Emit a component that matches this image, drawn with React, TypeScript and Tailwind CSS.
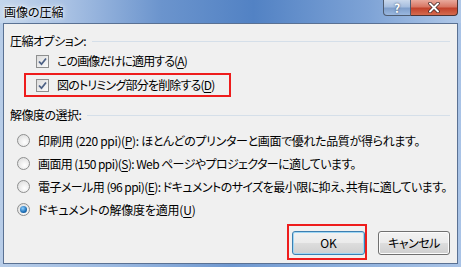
import React from "react";

const FONT = "font-['Noto_Sans_CJK_JP','Noto_Sans',sans-serif] [font-feature-settings:'palt']";

function U({ children }: { children: React.ReactNode }) {
  return <span className="underline underline-offset-2">{children}</span>;
}

function Checkbox() {
  return (
    <span className="flex h-[13px] w-[13px] shrink-0 items-center justify-center border border-[#8e8f8f] bg-[linear-gradient(135deg,#dcdcdc,#fbfbfb)]">
      <svg width="11" height="11" viewBox="0 0 11 11">
        <path d="M2 5.5 L4.5 8.2 L9 2.5" fill="none" stroke="#4d6185" strokeWidth="1.8" />
      </svg>
    </span>
  );
}

function Radio({ checked }: { checked?: boolean }) {
  return (
    <span className="flex h-[13px] w-[13px] shrink-0 items-center justify-center rounded-full border border-[#8e8f8f] bg-[radial-gradient(circle_at_60%_65%,#ffffff,#d8d8d8)]">
      {checked && (
        <span className="h-[7px] w-[7px] rounded-full bg-[radial-gradient(circle_at_40%_35%,#8fd0ff,#1a6db5_60%,#0b3f73)]" />
      )}
    </span>
  );
}

function Heading({ label }: { label: string }) {
  return (
    <div className="flex h-[16px] items-center pr-[7px]">
      <span className="pl-[6px] tracking-[-0.5px]">{label}</span>
      <span className="ml-[6px] h-px flex-1 bg-[#d5dfe9]" />
    </div>
  );
}

const RADIOS = [
  { pre: "印刷用 (220 ppi)(", key: "P", post: "): ほとんどのプリンターと画面で優れた品質が得られます。", track: "tracking-[-0.35px]" },
  { pre: "画面用 (150 ppi)(", key: "S", post: "): Web ページやプロジェクターに適しています。", track: "tracking-[-0.6px]" },
  { pre: "電子メール用 (96 ppi)(", key: "E", post: "): ドキュメントのサイズを最小限に抑え、共有に適しています。", track: "tracking-[-0.55px]" },
  { pre: "ドキュメントの解像度を適用(", key: "U", post: ")", checked: true, track: "tracking-[-0.2px]" },
];

export default function App() {
  return (
    <div className={`relative h-[267px] w-[461px] overflow-hidden bg-[linear-gradient(90deg,#b8cde8_0%,#9ab8e0_25%,#6f98d0_50%,#8cafdc_75%,#a9c3e6_100%)] text-[12px] leading-none text-black ${FONT}`}>
      {/* title bar */}
      <div className="relative flex h-[23px] items-center bg-[linear-gradient(90deg,#c4d6ec_0%,#a7c0e3_15%,#6b94cd_35%,#5282c4_55%,#7ea3d6_80%,#b0c8e8_100%)]">
        <span className="pl-[4px] pt-[1px] text-[12px] text-black [text-shadow:0_0_6px_#ffffff,0_0_3px_#ffffff]">画像の圧縮</span>
        <div className="absolute right-[3px] top-0 flex h-[16px]">
          <div className="flex w-[28px] items-center justify-center rounded-bl-[4px] border border-t-0 border-[#4d5b70] bg-[linear-gradient(180deg,#c9d8ec_0%,#a6bedf_45%,#7f9fcb_55%,#9ab7df_100%)] text-[12px] font-bold text-white [text-shadow:0_0_2px_#2c3e5a]">
            ?
          </div>
          <div className="flex w-[47px] items-center justify-center rounded-br-[4px] border border-l-0 border-t-0 border-[#4d3333] bg-[linear-gradient(180deg,#e9a99c_0%,#d87764_45%,#c2422b_55%,#d56b4f_100%)]">
            <svg width="14" height="11" viewBox="0 0 14 11">
              <path d="M3 1.5 L11 9.5 M11 1.5 L3 9.5" stroke="#3a2020" strokeWidth="3.4" strokeLinecap="round" />
              <path d="M3 1.5 L11 9.5 M11 1.5 L3 9.5" stroke="#ffffff" strokeWidth="2" strokeLinecap="round" />
            </svg>
          </div>
        </div>
      </div>

      {/* client area */}
      <div className="mx-[3px] h-[241px] border border-[#5a7193] bg-[#f0f0f0] pt-[9px]">
        <Heading label="圧縮オプション:" />
        <div className="flex h-[24px] items-center gap-[8px] pl-[32px]">
          <Checkbox />
          <span className="tracking-[-0.9px]">この画像だけに適用する(<U>A</U>)</span>
        </div>
        <div className="ml-[20px] flex h-[24px] w-[207px] items-center gap-[8px] border-2 border-[#ee1c1c] pl-[10px]">
          <Checkbox />
          <span className="tracking-[-0.8px]">図のトリミング部分を削除する(<U>D</U>)</span>
        </div>
        <div className="mt-[10px]">
          <Heading label="解像度の選択:" />
        </div>
        <div className="mt-[6px] flex flex-col pl-[13px]">
          {RADIOS.map((r) => (
            <div key={r.key} className="flex h-[23px] items-center gap-[8px]">
              <Radio checked={r.checked} />
              <span className={`whitespace-nowrap ${r.track}`}>
                {r.pre}
                <U>{r.key}</U>
                {r.post}
              </span>
            </div>
          ))}
        </div>
        <div className="mt-[3px] flex items-start justify-end gap-[11px] pr-[7px]">
          <div className="border-2 border-[#ee1c1c] pb-[3px] pl-[3px] pr-0 pt-[5px]">
            <button className="flex h-[24px] w-[73px] items-center justify-center rounded-[3px] border border-[#3c7fb1] bg-[linear-gradient(180deg,#f2f2f2_0%,#ebebeb_48%,#dddddd_52%,#cfcfcf_100%)] shadow-[inset_0_0_0_1px_#9fd6f4]">
              OK
            </button>
          </div>
          <button className="mt-[7px] flex h-[24px] w-[72px] items-center justify-center rounded-[3px] border border-[#707070] bg-[linear-gradient(180deg,#f2f2f2_0%,#ebebeb_48%,#dddddd_52%,#cfcfcf_100%)] shadow-[inset_0_0_0_1px_#fcfcfc] tracking-[-0.5px]">
            キャンセル
          </button>
        </div>
      </div>
    </div>
  );
}
